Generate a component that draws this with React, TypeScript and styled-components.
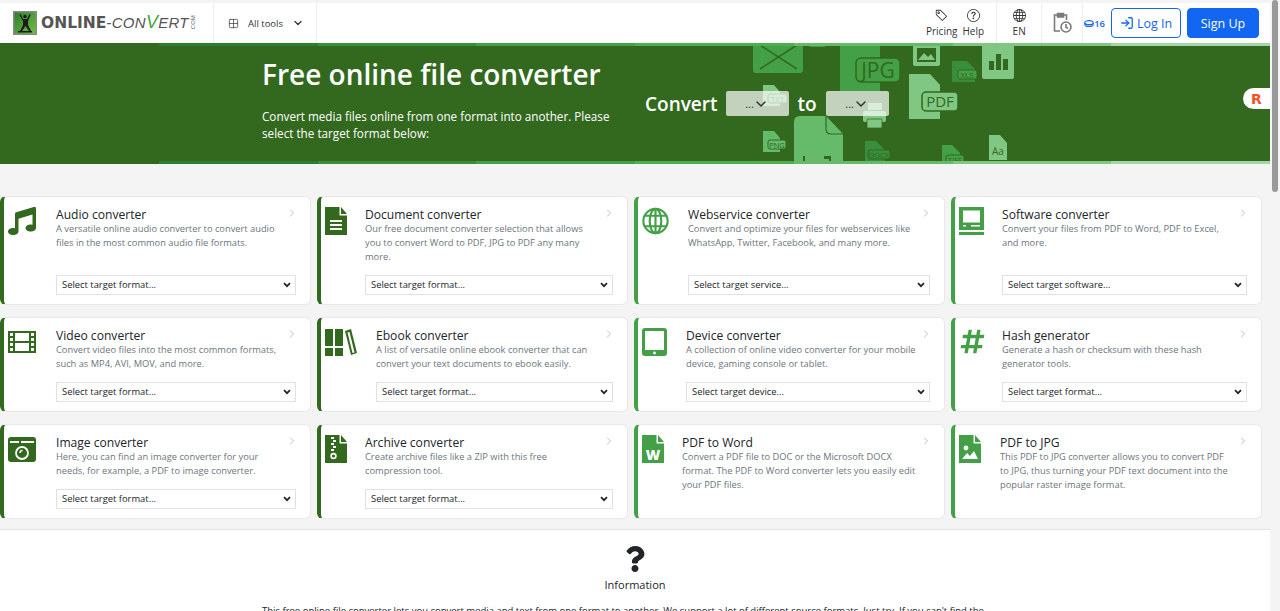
import type { ReactNode } from 'react';
import styled, { createGlobalStyle } from 'styled-components';
import { ChevronDown, ChevronRight, Grid2x2, LogIn } from 'lucide-react';
import { BsGlobe, BsQuestionCircle, BsTag } from 'react-icons/bs';
import { FaHashtag, FaMusic, FaQuestion } from 'react-icons/fa';

const DARK_GREEN = '#33691e';
const GREEN = '#43a047';
const BLUE = '#1266f1';
const STRIP_COLORS = ['#33691e', '#2e7d32', '#388e3c', '#43a047', '#4caf50', '#66bb6a', '#81c784', '#a5d6a7'];
const SELECT_ARROW = "url(\"data:image/svg+xml,%3Csvg xmlns='http://www.w3.org/2000/svg' viewBox='0 0 8 6'%3E%3Cpath d='M1 1.200l3 3 3-3' fill='none' stroke='%23222' stroke-width='1.700'/%3E%3C/svg%3E\")";

const GlobalStyle = createGlobalStyle`
  html, body {
    height: 100%;
    margin: 0;
    overflow: hidden;
  }

  body {
    background: #fff;
    color: #212529;
    font-family: 'Open Sans', 'Noto Sans', sans-serif;
  }
`;

const FileIcon = ({ color, children }: { color: string; children?: ReactNode }) => (
  <svg width="22" height="28" viewBox="0 0 22 28">
    <path d="M0 0h14.5v8.5H22V28H0z" fill={color} />
    <path d="M16 0l6 7h-6z" fill={color} />
    {children}
  </svg>
);

const DocIcon = () => (
  <FileIcon color={DARK_GREEN}>
    <path d="M5 13h12v2H5zM5 17h12v2H5zM5 21h12v2H5z" fill="#fff" />
  </FileIcon>
);

const ZipIcon = () => (
  <FileIcon color={DARK_GREEN}>
    <path d="M6 2h3v2H6zM8 5h3v2H8zM6 8h3v2H6zM8 11h3v2H8zM6 14h3v2H6z" fill="#fff" />
    <circle cx="8.5" cy="21" r="2.4" fill="none" stroke="#fff" strokeWidth="1.6" />
  </FileIcon>
);

const WordIcon = () => (
  <FileIcon color={GREEN}>
    <text x="11" y="25" textAnchor="middle" fontSize="14" fontWeight="800" fill="#fff" fontFamily="Open Sans">W</text>
  </FileIcon>
);

const PictureFileIcon = () => (
  <FileIcon color={GREEN}>
    <circle cx="7" cy="13" r="2.4" fill="#fff" />
    <path d="M3 24l5-6 3 3 4-5 4 8z" fill="#fff" />
  </FileIcon>
);

const WebIcon = () => (
  <svg width="27" height="28" viewBox="0 0 28 28" fill="none" stroke={GREEN} strokeWidth="2.2">
    <circle cx="14" cy="14" r="12.6" />
    <ellipse cx="14" cy="14" rx="6" ry="12.6" />
    <path d="M14 1.4v25.2M3 8.5h22M3 19.5h22" />
  </svg>
);

const SoftwareIcon = () => (
  <svg width="25" height="28" viewBox="0 0 25 28">
    <path d="M0 0h25v23H0z" fill={GREEN} />
    <path d="M4 3.5h17v12H4z" fill="#fff" />
    <path d="M4 18h3v1.6H4zM12 18h9v1.6h-9z" fill="#fff" />
    <path d="M0 25h25v3H0z" fill={GREEN} />
  </svg>
);

const FilmIcon = () => (
  <svg width="28" height="28" viewBox="0 0 28 28" fill={DARK_GREEN}>
    <path
      fillRule="evenodd"
      d="M0 3h28v22H0zM2 5v3h3V5zm0 5v3h3v-3zm0 5v3h3v-3zm0 5v3h3v-3zM7 5v8h14V5zm0 10v8h14v-8zM23 5v3h3V5zm0 5v3h3v-3zm0 5v3h3v-3zm0 5v3h3v-3z"
    />
  </svg>
);

const BooksIcon = () => (
  <svg width="32" height="28" viewBox="0 0 32 28" fill={DARK_GREEN}>
    <path d="M0 1h8v17H0zM0 20h8v8H0zM10 1h8v17h-8zM10 20h8v8h-8z" />
    <path d="M20 3l6-2 6 24-6 2zM22.500 4.500l5 20.500 2-.6-5-20.500z" fillRule="evenodd" />
  </svg>
);

const TabletIcon = () => (
  <svg width="25" height="28" viewBox="0 0 25 28">
    <rect width="25" height="28" rx="3" fill={GREEN} />
    <path d="M3 3h19v19H3z" fill="#fff" />
    <circle cx="12.500" cy="25" r="1.400" fill="#fff" />
  </svg>
);

const CameraIcon = () => (
  <svg width="28" height="28" viewBox="0 0 28 28">
    <rect y="2" width="28" height="25" rx="3" fill={DARK_GREEN} />
    <path d="M2 6h9v2H2zM13 6h13v2H13z" fill="#fff" />
    <circle cx="14" cy="18" r="6" fill="none" stroke="#fff" strokeWidth="1.800" />
    <path d="M12 18a2.500 2.500 0 012.500-2.500" fill="none" stroke="#fff" strokeWidth="1.400" />
  </svg>
);

const HeroArt = () => (
  <svg width="320" height="121" viewBox="720 43 320 121">
    <rect x="753" y="30" width="50" height="43" rx="3" fill="#43a047" />
    <path d="M760 45l37 24M797 45l-37 24M762 43h32" stroke={DARK_GREEN} strokeWidth="1.500" fill="none" />
    <rect x="809" y="36" width="17" height="11" rx="2" fill="#43a047" />

    <path d="M840 36h40v55h-40z" fill="#43a047" />
    <rect x="856" y="58" width="44" height="24" rx="5" fill="#43a047" stroke={DARK_GREEN} strokeWidth="1.500" />
    <text x="878" y="78" textAnchor="middle" fontSize="21" fill={DARK_GREEN} fontFamily="Open Sans">JPG</text>

    <rect x="913" y="36" width="27" height="30" rx="2" fill="#81c784" />
    <path d="M917 48h19v14h-19z" fill={DARK_GREEN} />
    <path d="M918 60l6-7 4 4 3-3 4 6z" fill="#81c784" />

    <path d="M952 61h15l8 8v13h-23z" fill="#388e3c" />
    <rect x="958" y="70" width="19" height="9" rx="2" fill="#43a047" stroke={DARK_GREEN} />
    <text x="967" y="78" textAnchor="middle" fontSize="8" fill={DARK_GREEN} fontFamily="Open Sans">XLS</text>

    <rect x="982" y="36" width="32" height="43" rx="2" fill="#81c784" />
    <path d="M989 61h5v9h-5zM996 54h5v16h-5zM1003 59h5v11h-5z" fill={DARK_GREEN} />

    <path d="M909 74h21l10 11v34h-31z" fill="#81c784" />
    <rect x="922" y="92" width="36" height="19" rx="4" fill="#81c784" stroke={DARK_GREEN} strokeWidth="1.500" />
    <text x="940" y="107" textAnchor="middle" fontSize="15" fill={DARK_GREEN} fontFamily="Open Sans">PDF</text>

    <path d="M763 85h11l6 7v14h-17z" fill="#81c784" />
    <rect x="768" y="94" width="19" height="9" rx="2" fill="#81c784" stroke={DARK_GREEN} />
    <text x="777.500" y="102" textAnchor="middle" fontSize="8" fill={DARK_GREEN} fontFamily="Open Sans">TXT</text>

    <path d="M868 103h14v7h-14z" fill="#81c784" />
    <rect x="863" y="111" width="23" height="11" rx="2" fill="#81c784" />
    <rect x="867" y="119" width="15" height="9" rx="1" fill="#81c784" stroke={DARK_GREEN} strokeWidth="0.800" />

    <path d="M800 116h26l17 18v30h-49v-42q0-6 6-6z" fill="#66bb6a" />
    <path d="M826 116v13q0 5 5 5h12" fill="none" stroke={DARK_GREEN} strokeWidth="1.200" />
    <path d="M803 156h2v6h-2zM824 156h7v6h-2v-3h-5z" fill={DARK_GREEN} />

    <path d="M763 131h11l6 7v14h-17z" fill="#66bb6a" />
    <rect x="768" y="140" width="18" height="9" rx="2" fill="#66bb6a" stroke={DARK_GREEN} />
    <text x="777" y="148" textAnchor="middle" fontSize="7.500" fill={DARK_GREEN} fontFamily="Open Sans">PNG</text>

    <path d="M865 141h11l9 9v14h-20z" fill="#388e3c" />
    <rect x="868" y="150" width="22" height="9" rx="2" fill="#388e3c" stroke={DARK_GREEN} />
    <text x="879" y="158" textAnchor="middle" fontSize="7.500" fill={DARK_GREEN} fontFamily="Open Sans">DOCX</text>

    <path d="M942 145h10l8 8v11h-18z" fill="#43a047" />
    <rect x="946" y="155" width="18" height="10" rx="2" fill="#43a047" stroke={DARK_GREEN} />
    <text x="955" y="163" textAnchor="middle" fontSize="7.500" fill={DARK_GREEN} fontFamily="Open Sans">TIFF</text>

    <path d="M989 135h11l7 8v17h-18z" fill="#81c784" />
    <text x="998" y="155" textAnchor="middle" fontSize="10" fill={DARK_GREEN} fontFamily="Open Sans">Aa</text>
  </svg>
);

const LogoMark = () => (
  <svg width="24" height="24" viewBox="0 0 24 24">
    <defs>
      <linearGradient id="logo-bg" x1="0" y1="0" x2="1" y2="1">
        <stop offset="0" stopColor="#2e7d32" />
        <stop offset="1" stopColor="#6fbf3a" />
      </linearGradient>
    </defs>
    <rect width="24" height="24" fill="#8a8a8a" />
    <rect x="1.500" y="1.500" width="21" height="21" fill="url(#logo-bg)" />
    <path
      d="M7 3l1 1 2 4h4l2-4 1-1 .5 1-2.500 6v4l3 6h-2l-3.500-5-3.500 5H7l3-6v-4L6.500 4zM10.200 5.500a1.800 1.800 0 103.600 0 1.800 1.800 0 10-3.600 0zM5 20h14v1.500H5z"
      fill="#1b1b1b"
    />
  </svg>
);

const ClipboardClockIcon = () => (
  <svg width="19" height="22" viewBox="0 0 19 22" fill="none" stroke="#7a7a7a" strokeWidth="1.600">
    <path d="M5 3H1.500v16H7" />
    <path d="M10 3h3.500v5" />
    <path d="M4.500 1.500h6v3.500h-6z" fill="#7a7a7a" />
    <circle cx="13" cy="15" r="5" fill="#fff" />
    <path d="M13 12v3.300l2 1.200" />
  </svg>
);

const CoinIcon = () => (
  <svg width="10" height="7" viewBox="0 0 11 8" fill="none" stroke={BLUE} strokeWidth="1.200">
    <ellipse cx="5.500" cy="3" rx="4.800" ry="2.300" />
    <path d="M.7 3v2c0 1.300 2.200 2.300 4.800 2.300s4.800-1 4.800-2.300V3" />
  </svg>
);

interface CardData {
  title: string
  text: string
  select?: string
  icon: ReactNode
  offset: number
  light?: boolean
}

const cards: CardData[] = [
  { title: 'Audio converter', text: 'A versatile online audio converter to convert audio files in the most common audio file formats.', select: 'Select target format...', icon: <FaMusic size={28} color={DARK_GREEN} />, offset: 56 },
  { title: 'Document converter', text: 'Our free document converter selection that allows you to convert Word to PDF, JPG to PDF any many more.', select: 'Select target format...', icon: <DocIcon />, offset: 48 },
  { title: 'Webservice converter', text: 'Convert and optimize your files for webservices like WhatsApp, Twitter, Facebook, and many more.', select: 'Select target service...', icon: <WebIcon />, offset: 54, light: true },
  { title: 'Software converter', text: 'Convert your files from PDF to Word, PDF to Excel, and more.', select: 'Select target software...', icon: <SoftwareIcon />, offset: 51, light: true },
  { title: 'Video converter', text: 'Convert video files into the most common formats, such as MP4, AVI, MOV, and more.', select: 'Select target format...', icon: <FilmIcon />, offset: 56 },
  { title: 'Ebook converter', text: 'A list of versatile online ebook converter that can convert your text documents to ebook easily.', select: 'Select target format...', icon: <BooksIcon />, offset: 59 },
  { title: 'Device converter', text: 'A collection of online video converter for your mobile device, gaming console or tablet.', select: 'Select target device...', icon: <TabletIcon />, offset: 52, light: true },
  { title: 'Hash generator', text: 'Generate a hash or checksum with these hash generator tools.', select: 'Select target format...', icon: <FaHashtag size={27} color={GREEN} />, offset: 51, light: true },
  { title: 'Image converter', text: 'Here, you can find an image converter for your needs, for example, a PDF to image converter.', select: 'Select target format...', icon: <CameraIcon />, offset: 56 },
  { title: 'Archive converter', text: 'Create archive files like a ZIP with this free compression tool.', select: 'Select target format...', icon: <ZipIcon />, offset: 48 },
  { title: 'PDF to Word', text: 'Convert a PDF file to DOC or the Microsoft DOCX format. The PDF to Word converter lets you easily edit your PDF files.', icon: <WordIcon />, offset: 48, light: true },
  { title: 'PDF to JPG', text: 'This PDF to JPG converter allows you to convert PDF to JPG, thus turning your PDF text document into the popular raster image format.', icon: <PictureFileIcon />, offset: 49, light: true },
];

const App = () => (
  <Page>
    <GlobalStyle />
    <Main>
      <Header>
        <LogoLink>
          <LogoMark />
          <LogoText>
            <LogoBold>ONLINE</LogoBold>
            <LogoThin>-CON<LogoV>V</LogoV>ERT</LogoThin>
          </LogoText>
          <LogoCom>.COM</LogoCom>
        </LogoLink>
        <AllTools>
          <Grid2x2 size={11} strokeWidth={1.5} />
          <span>All tools</span>
          <ChevronDown size={12} strokeWidth={2.5} />
        </AllTools>
        <HeaderRight>
          <NavGroup>
            <NavItem>
              <BsTag size={13} />
              Pricing
            </NavItem>
            <NavItem>
              <BsQuestionCircle size={13} />
              Help
            </NavItem>
          </NavGroup>
          <LangItem>
            <BsGlobe size={13} />
            EN
          </LangItem>
          <HistoryItem>
            <ClipboardClockIcon />
          </HistoryItem>
          <Credits>
            <CoinIcon />
            16
          </Credits>
          <LoginButton>
            <LogIn size={14} strokeWidth={2.2} />
            Log In
          </LoginButton>
          <SignUpButton>Sign Up</SignUpButton>
        </HeaderRight>
      </Header>

      <Hero>
        <Strip $top>
          {STRIP_COLORS.map(color => <StripPart key={color} $color={color} />)}
        </Strip>
        <ArtLayer>
          <HeroArt />
        </ArtLayer>
        <HeroText>
          <HeroTitle>Free online file converter</HeroTitle>
          <HeroLead>Convert media files online from one format into another. Please select the target format below:</HeroLead>
        </HeroText>
        <ConvertRow>
          <ConvertWord>Convert</ConvertWord>
          <FormatBox>
            <span>...</span>
            <ChevronDown size={16} strokeWidth={2.2} />
          </FormatBox>
          <ToWord>to</ToWord>
          <FormatBox>
            <span>...</span>
            <ChevronDown size={16} strokeWidth={2.2} />
          </FormatBox>
        </ConvertRow>
        <FloatBadge>R</FloatBadge>
        <Strip>
          {STRIP_COLORS.map(color => <StripPart key={color} $color={color} />)}
        </Strip>
      </Hero>

      <CardsSection>
        <CardGrid>
          {cards.map(card => (
            <Card key={card.title} $light={card.light}>
              <IconSlot $offset={card.offset}>{card.icon}</IconSlot>
              <CardBody>
                <CardTitle>{card.title}</CardTitle>
                <CardText>{card.text}</CardText>
                {card.select && (
                  <TargetSelect defaultValue="">
                    <option value="">{card.select}</option>
                  </TargetSelect>
                )}
              </CardBody>
              <CardArrow>
                <ChevronRight size={12} strokeWidth={1.5} />
              </CardArrow>
            </Card>
          ))}
        </CardGrid>
      </CardsSection>

      <InfoSection>
        <FaQuestion size={26} color="#212529" />
        <InfoTitle>Information</InfoTitle>
        <InfoText>
          This free online file converter lets you convert media and text from one format to another. We support a lot of different source formats. Just try. If you can't find the
        </InfoText>
      </InfoSection>
    </Main>
    <ScrollTrack>
      <ScrollThumb />
    </ScrollTrack>
  </Page>
);

export default App;

const Page = styled.div`
  background: #fff;
  display: flex;
  height: 100vh;
  overflow: hidden;
`;

const Main = styled.main`
  flex: 1;
  min-width: 0;
`;

const ScrollTrack = styled.div`
  background: #f4f4f4;
  flex: none;
  width: 10px;
`;

const ScrollThumb = styled.div`
  background: #999;
  border-radius: 3px;
  height: 192px;
  margin-left: 2px;
  width: 6px;
`;

const Header = styled.header`
  align-items: stretch;
  background: #fff;
  border-top: 3px solid #f4f4f4;
  display: flex;
  height: 40px;
`;

const LogoLink = styled.div`
  align-items: center;
  border-right: 1px solid #eee;
  display: flex;
  padding-left: 13px;
  width: 200px;
`;

const LogoText = styled.div`
  align-items: baseline;
  display: flex;
  margin-left: 4px;
`;

const LogoBold = styled.span`
  color: #555;
  font-family: 'DejaVu Sans', sans-serif;
  font-size: 15.500px;
  font-weight: 700;
`;

const LogoThin = styled.span`
  color: #555;
  font-family: 'Liberation Sans', sans-serif;
  font-size: 15px;
  font-style: italic;
  letter-spacing: 0.3px;
`;

const LogoV = styled.span`
  color: #3fa535;
  font-size: 18px;
  line-height: 0;
`;

const LogoCom = styled.span`
  color: #666;
  font-family: 'Liberation Sans', sans-serif;
  font-size: 6px;
  margin-left: -4px;
  transform: rotate(-90deg);
`;

const AllTools = styled.div`
  align-items: center;
  border-right: 1px solid #eee;
  color: #333;
  display: flex;
  font-size: 9.500px;
  font-weight: 500;
  gap: 9px;
  padding-left: 14px;
  width: 88px;
`;

const HeaderRight = styled.div`
  align-items: stretch;
  display: flex;
  margin-left: auto;
  padding-right: 11px;
`;

const NavGroup = styled.div`
  border-right: 1px solid #eee;
  display: flex;
  gap: 5px;
  padding-right: 12px;
`;

const NavItem = styled.div`
  align-items: center;
  color: #333;
  display: flex;
  flex-direction: column;
  font-size: 10px;
  gap: 2px;
  justify-content: center;
  padding-top: 1px;
`;

const LangItem = styled(NavItem)`
  border-right: 1px solid #eee;
  width: 44px;
`;

const HistoryItem = styled.div`
  align-items: center;
  border-right: 1px solid #eee;
  display: flex;
  justify-content: center;
  width: 40px;
`;

const Credits = styled.div`
  align-items: center;
  color: ${BLUE};
  display: flex;
  font-size: 9.500px;
  font-weight: 600;
  margin: 0 6px 0 1px;
`;

const LoginButton = styled.button`
  align-items: center;
  align-self: center;
  background: #fff;
  border: 1.500px solid ${BLUE};
  border-radius: 4px;
  color: ${BLUE};
  display: flex;
  font-family: inherit;
  font-size: 12.500px;
  font-weight: 500;
  gap: 3px;
  height: 30px;
  justify-content: center;
  padding: 0;
  width: 70px;
`;

const SignUpButton = styled(LoginButton)`
  background: ${BLUE};
  color: #fff;
  margin-left: 6px;
  width: 72px;
`;

const Hero = styled.section`
  background: ${DARK_GREEN};
  display: flex;
  height: 121px;
  overflow: hidden;
  padding-left: 262px;
  position: relative;
`;

const Strip = styled.div<{ $top?: boolean }>`
  display: flex;
  height: 3px;
  left: 0;
  position: absolute;
  right: 0;
  ${({ $top }) => ($top ? 'top: 0;' : 'bottom: 0;')}
  z-index: 2;
`;

const StripPart = styled.div<{ $color: string }>`
  background: ${({ $color }) => $color};
  flex: 1;
`;

const ArtLayer = styled.div`
  left: 720px;
  position: absolute;
  top: 0;
`;

const HeroText = styled.div`
  color: #fff;
  position: relative;
  width: 360px;
`;

const HeroTitle = styled.h1`
  font-size: 28px;
  font-weight: 600;
  line-height: 38px;
  margin: 12px 0 0;
`;

const HeroLead = styled.p`
  font-size: 11.700px;
  line-height: 17px;
  margin: 15px 0 0;
  width: 350px;
`;

const ConvertRow = styled.div`
  align-items: center;
  color: #fff;
  display: flex;
  font-size: 19px;
  font-weight: 600;
  height: 25px;
  margin-left: 23px;
  padding-top: 48px;
  position: relative;
`;

const ConvertWord = styled.span`
  margin-right: 8px;
`;

const ToWord = styled.span`
  margin: 0 9px;
`;

const FormatBox = styled.div`
  align-items: center;
  background: rgba(255, 255, 255, 0.7);
  border-radius: 2px;
  color: #333;
  display: flex;
  font-size: 11px;
  font-weight: 400;
  height: 25px;
  justify-content: center;
  width: 63px;

  svg {
    margin-left: -1px;
  }
`;

const FloatBadge = styled.div`
  align-items: center;
  background: #fff;
  border-radius: 11px 0 0 11px;
  color: #f4511e;
  display: flex;
  font-family: 'DejaVu Sans', sans-serif;
  font-size: 14px;
  font-weight: 700;
  height: 21px;
  justify-content: center;
  position: absolute;
  right: 0;
  top: 45px;
  width: 27px;
`;

const CardsSection = styled.section`
  background: #f4f4f4;
  border-bottom: 1px solid #e4e4e4;
  padding: 32px 8px 10px 0;
`;

const CardGrid = styled.div`
  display: grid;
  gap: 12px 6px;
  grid-template-columns: repeat(4, 1fr);
`;

const Card = styled.article<{ $light?: boolean }>`
  background: #fff;
  border: 1px solid #e8e8e8;
  border-left: 4px solid ${({ $light }) => ($light ? GREEN : DARK_GREEN)};
  border-radius: 6px;
  display: flex;
  padding: 9.500px 14px 9.500px 0;
  position: relative;
`;

const IconSlot = styled.div<{ $offset: number }>`
  box-sizing: border-box;
  flex: none;
  line-height: 0;
  padding-left: 4px;
  width: ${({ $offset }) => `${$offset - 4}px`};
`;

const CardBody = styled.div`
  display: flex;
  flex: 1;
  flex-direction: column;
  min-width: 0;
`;

const CardTitle = styled.h3`
  color: #212529;
  font-size: 12.100px;
  font-weight: 500;
  line-height: 15px;
  margin: 0;
`;

const CardText = styled.p`
  color: #6c757d;
  font-size: 9.300px;
  line-height: 14px;
  margin: 0 0 11px;
  padding-right: 13px;
`;

const TargetSelect = styled.select`
  appearance: none;
  background: #fff ${SELECT_ARROW} no-repeat right 4px center / 8px 6px;
  border: 1px solid #dee2e6;
  border-radius: 0;
  color: #212529;
  font-family: inherit;
  font-size: 9.400px;
  height: 20px;
  margin-top: auto;
  padding: 0 0 0 5px;
  width: 100%;
`;

const CardArrow = styled.div`
  color: #aaa;
  line-height: 0;
  position: absolute;
  right: 12px;
  top: 10px;
`;

const InfoSection = styled.section`
  align-items: center;
  display: flex;
  flex-direction: column;
  padding-top: 16px;
`;

const InfoTitle = styled.div`
  color: #212529;
  font-size: 11px;
  font-weight: 500;
  line-height: 15px;
  margin-top: 5px;
`;

const InfoText = styled.p`
  color: #212529;
  font-size: 9.500px;
  line-height: 14px;
  margin: 12px 0 0;
  white-space: nowrap;
  width: 746px;
`;
